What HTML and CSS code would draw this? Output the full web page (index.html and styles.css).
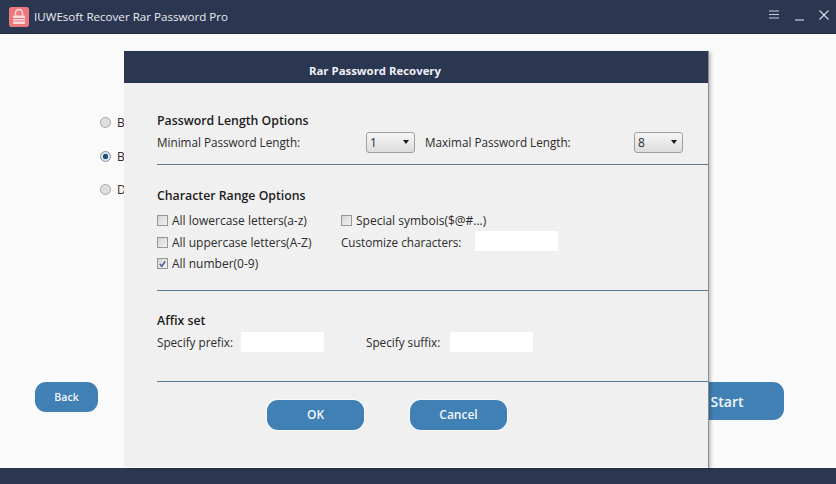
FILE: index.html
```html
<!DOCTYPE html>
<html lang="en">
<head>
<meta charset="utf-8">
<title>IUWEsoft Recover Rar Password Pro</title>
<link rel="stylesheet" href="styles.css">
</head>
<body>
<div class="app">
  <header class="titlebar">
    <svg class="logo" viewBox="0 0 20 20" width="20" height="20" aria-hidden="true">
      <rect width="20" height="20" rx="2.5" fill="#ee777e"/>
      <path d="M6.5 8.5V6a3.5 3.5 0 0 1 7 0v2.500" fill="none" stroke="#fbdcdc" stroke-width="1.500"/>
      <rect x="4" y="8.500" width="12" height="8.500" rx="1" fill="#fbdcdc"/>
      <path d="M4 11.500h12M4 14h12" stroke="#ee777e" stroke-width="1"/>
    </svg>
    <span class="app-title">IUWEsoft Recover Rar Password Pro</span>
    <div class="controls">
      <svg viewBox="0 0 10 9" width="10" height="9" aria-hidden="true"><path d="M0 1h10M0 4.500h10M0 8h10" stroke="#c9cfdb" stroke-width="1.100"/></svg>
      <svg class="min" viewBox="0 0 9 10" width="9" height="10" aria-hidden="true"><path d="M0 9h9" stroke="#c9cfdb" stroke-width="1.200"/></svg>
      <svg viewBox="0 0 10 10" width="10" height="10" aria-hidden="true"><path d="M.5.500l9 9M9.500.500l-9 9" stroke="#d5dae4" stroke-width="1.100"/></svg>
    </div>
  </header>

  <main class="content">
    <ul class="modes">
      <li class="mode"><span class="radio"></span>B</li>
      <li class="mode"><span class="radio on"></span>B</li>
      <li class="mode"><span class="radio"></span>D</li>
    </ul>
    <div class="nav">
      <button class="btn back">Back</button>
      <button class="btn start">Start</button>
    </div>

    <section class="dialog">
      <h1 class="dialog-title">Rar Password Recovery</h1>

      <div class="group g-length">
        <h2>Password Length Options</h2>
        <div class="row length-row">
          <span class="l-min">Minimal Password Length:</span>
          <span class="select s-min">1<i></i></span>
          <span class="l-max">Maximal Password Length:</span>
          <span class="select s-max">8<i></i></span>
        </div>
      </div>

      <div class="group g-range">
        <h2>Character Range Options</h2>
        <div class="range-grid">
          <label class="check"><span class="box"></span>All lowercase letters(a-z)</label>
          <label class="check"><span class="box"></span>Special symbois($@#...)</label>
          <label class="check"><span class="box"></span>All uppercase letters(A-Z)</label>
          <label class="custom">Customize characters:<span class="field f-custom"></span></label>
          <label class="check"><span class="box checked"><svg viewBox="0 0 10 10" width="10" height="10" aria-hidden="true"><path d="M2 5l2.200 2.500L8 2" fill="none" stroke="#3d5a8c" stroke-width="1.600"/></svg></span>All number(0-9)</label>
        </div>
      </div>

      <div class="group g-affix">
        <h2>Affix set</h2>
        <div class="row affix-row">
          <span>Specify prefix:</span><span class="field f-prefix"></span>
          <span>Specify suffix:</span><span class="field f-suffix"></span>
        </div>
      </div>

      <div class="actions">
        <button class="btn dlg">OK</button>
        <button class="btn dlg">Cancel</button>
      </div>
    </section>
  </main>

  <footer class="statusbar"></footer>
</div>
</body>
</html>
```
FILE: styles.css
```css
* { box-sizing: border-box; }
html, body { margin: 0; padding: 0; }
body { font-family: "Open Sans", "Noto Sans", sans-serif; font-size: 11.700px; color: #2b2b2b; overflow: hidden; }
.app { width: 836px; height: 484px; display: flex; flex-direction: column; background: #fbfafa; }

.titlebar { height: 34px; flex: none; display: flex; align-items: center; padding: 0 7px 0 9px; background: #2b3650; border-bottom: 1px solid #232c42; color: #e9ecf2; }
.logo { flex: none; margin-right: 5px; }
.app-title { font-size: 11.600px; }
.controls { margin-left: auto; display: flex; align-items: center; gap: 15px; margin-bottom: 4px; }
.controls .min { margin-left: 1px; margin-top: 2px; }

.content { flex: 1; position: relative; display: flex; flex-direction: column; padding: 0 52px 0 35px; }
.modes { list-style: none; margin: 80px 0 0 65px; padding: 0; display: flex; flex-direction: column; gap: 16.500px; }
.mode { display: flex; align-items: center; height: 17px; gap: 6px; font-size: 12px; }
.radio { width: 11px; height: 11px; border-radius: 50%; border: 1px solid #a6a6a6; background: #dedede; }
.radio.on { background: radial-gradient(circle, #24507e 0 2.500px, #dfe6ee 3px); border-color: #7f8fa3; }

.nav { margin-top: auto; margin-bottom: 48px; display: flex; justify-content: space-between; align-items: flex-start; }
.btn { border: 0; background: #4080b5; color: #f2f7fb; font-family: "Open Sans", "Noto Sans", sans-serif; font-weight: 600; }
.back { width: 63px; height: 30px; border-radius: 11px; font-size: 10.600px; }
.start { width: 114px; height: 38px; border-radius: 11px; font-size: 14px; }

.dialog { position: absolute; left: 124px; top: 17px; width: 584px; height: 417px; background: #f0f0f0; border-bottom: 1px solid #fff; box-shadow: 1px 0 0 #8b8b8b, 3px 1px 3px rgba(0,0,0,.22); display: flex; flex-direction: column; }
.dialog-title { margin: 0; height: 32px; flex: none; background: #2b3650; color: #eef0f4; font-size: 11.400px; font-weight: 700; text-align: center; line-height: 40px; padding-right: 82px; }
.group { margin-left: 33px; border-bottom: 1px solid #5a7d96; }
.group h2 { margin: 0; font-size: 12.300px; font-weight: 600; color: #1c1c1c; line-height: 17px; }
.row { display: flex; align-items: center; }

.g-length { height: 82px; padding-top: 29px; }
.length-row { height: 20px; margin-top: 3px; }
.l-min { width: 209px; }
.l-max { width: 209px; margin-left: 10px; }
.select { width: 49px; height: 21px; position: relative; border: 1px solid #a0a0a0; border-radius: 3px; padding-left: 3px; line-height: 19px; font-size: 12px; background: linear-gradient(#f6f6f6, #dcdcdc); }
.select i { position: absolute; right: 5px; top: 7px; width: 0; height: 0; border-left: 3.500px solid transparent; border-right: 3.500px solid transparent; border-top: 4px solid #1b1b1b; }

.g-range { height: 126px; padding-top: 22px; }
.range-grid { margin-top: 6px; display: grid; grid-template-columns: 184px 1fr; grid-auto-rows: 21.500px; align-items: center; }
.check { display: flex; align-items: center; gap: 4px; font-size: 12px; }
.box { width: 11px; height: 11px; flex: none; border: 1px solid #969696; background: linear-gradient(135deg, #d4d4d4, #f2f2f2); display: flex; align-items: center; justify-content: center; }
.box svg { display: block; }
.custom { display: flex; align-items: center; }
.field { display: block; height: 20px; background: #fff; }
.f-custom { width: 83px; margin-left: 14px; margin-top: -2px; }

.g-affix { height: 91px; padding-top: 21px; }
.affix-row { margin-top: 3px; height: 20px; }
.f-prefix { width: 83px; margin-left: 8px; margin-right: 42px; margin-top: -1px; }
.f-suffix { width: 83px; margin-left: 10px; margin-top: -1px; }

.actions { padding: 18px 0 0 143px; display: flex; gap: 46px; }
.dlg { width: 97px; height: 30px; padding-bottom: 2px; border-radius: 11px; font-size: 12px; box-shadow: 0 0 0 1px #f8fbfd; }

.statusbar { height: 16px; flex: none; background: #2b3650; }
```
